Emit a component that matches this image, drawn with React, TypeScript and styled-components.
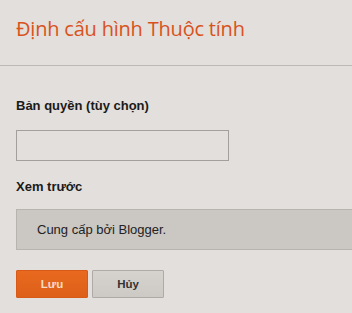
import React from "react"
import styled, { createGlobalStyle } from "styled-components"

const GlobalStyle = createGlobalStyle`
  html, body {
    margin: 0;
    padding: 0;
    background: #e2dfdc;
    overflow: hidden;
  }
`

const Page = styled.div`
  width: 352px;
  height: 313px;
  background: #e2dfdc;
  font-family: "Liberation Sans", Arial, sans-serif;
  color: #222;
  overflow: hidden;
`

const Header = styled.div`
  padding: 15px 16px 22px;
  border-bottom: 1px solid #bdb9b6;
`

const Title = styled.h1`
  margin: 0;
  font-family: "Open Sans", "Noto Sans", sans-serif;
  font-weight: 400;
  font-size: 20px;
  line-height: 28px;
  color: #d9521c;
  letter-spacing: -0.2px;
`

const Body = styled.div`
  padding-left: 16px;
  display: flex;
  flex-direction: column;
`

const Label = styled.div<{ $top: number }>`
  margin-top: ${(p) => p.$top}px;
  font-size: 13px;
  font-weight: bold;
  line-height: 16px;
  color: #1a1a1a;
`

const TextInput = styled.input`
  box-sizing: border-box;
  margin-top: 16px;
  width: 213px;
  height: 31px;
  border: 1px solid #a29f9c;
  background: #e2dfdc;
  outline: none;
  padding: 0 6px;
  font-family: inherit;
  font-size: 13px;
`

const Preview = styled.div`
  box-sizing: border-box;
  margin-top: 14px;
  height: 41px;
  border: 1px solid #b7b3af;
  border-right: none;
  background: #cbc7c2;
  padding-left: 20px;
  font-size: 13px;
  line-height: 39px;
  color: #222;
`

const Actions = styled.div`
  display: flex;
  gap: 4px;
  margin-top: 20px;
`

const Button = styled.button<{ $primary?: boolean }>`
  box-sizing: border-box;
  width: 72px;
  height: 28px;
  font-family: "Liberation Sans", Arial, sans-serif;
  font-size: 11.5px;
  font-weight: bold;
  cursor: pointer;
  border: 1px solid ${(p) => (p.$primary ? "#d75b17" : "#aeaba7")};
  background: ${(p) =>
    p.$primary ? "linear-gradient(#e8691f, #de5f18)" : "linear-gradient(#d6d3cf, #cdc9c5)"};
  color: ${(p) => (p.$primary ? "#f7dcc8" : "#333")};
  border-radius: 1px;
`

export default function App() {
  return (
    <Page>
      <GlobalStyle />
      <Header>
        <Title>Định cấu hình Thuộc tính</Title>
      </Header>
      <Body>
        <Label $top={32}>Bản quyền (tùy chọn)</Label>
        <TextInput type="text" />
        <Label $top={18}>Xem trước</Label>
        <Preview>Cung cấp bởi Blogger.</Preview>
        <Actions>
          <Button $primary>Lưu</Button>
          <Button>Hủy</Button>
        </Actions>
      </Body>
    </Page>
  )
}
